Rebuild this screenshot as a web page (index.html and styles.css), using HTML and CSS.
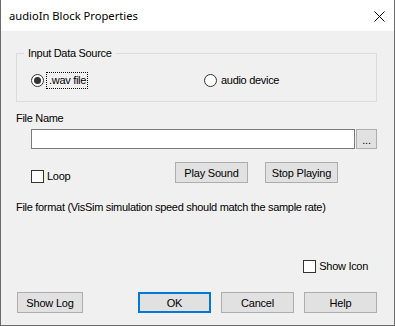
FILE: index.html
```html
<!DOCTYPE html>
<html lang="en">
<head>
  <meta charset="UTF-8">
  <title>audioIn Block Properties</title>
  <link rel="stylesheet" href="styles.css">
</head>
<body>

<div class="window">
  <div class="titlebar">
    <span class="title">audioIn Block Properties</span>
    <svg class="close" width="11" height="11" viewBox="0 0 11 11">
      <path d="M0.5 0.5 L10.5 10.5 M10.5 0.5 L0.5 10.5" stroke="#000" stroke-width="1" fill="none"/>
    </svg>
  </div>

  <div class="content">
    <fieldset class="group">
      <legend>Input Data Source</legend>
      <div class="radios">
        <label class="radio checked"><span class="circle"></span><span class="focus">.wav file</span></label>
        <label class="radio"><span class="circle"></span><span>audio device</span></label>
      </div>
    </fieldset>

    <div class="field-label">File Name</div>
    <div class="file-row">
      <div class="textbox"></div>
      <button class="btn browse">...</button>
    </div>

    <div class="play-row">
      <label class="check loop"><span class="box"></span>Loop</label>
      <button class="btn play">Play Sound</button>
      <button class="btn stop">Stop Playing</button>
    </div>

    <div class="note">File format (VisSim simulation speed should match the sample rate)</div>

    <div class="icon-row">
      <label class="check"><span class="box"></span>Show Icon</label>
    </div>

    <div class="bottom-row">
      <button class="btn showlog">Show Log</button>
      <div class="actions">
        <button class="btn default">OK</button>
        <button class="btn">Cancel</button>
        <button class="btn">Help</button>
      </div>
    </div>
  </div>
</div>

</body>
</html>
```

FILE: styles.css
```css
* {
  box-sizing: border-box;
  margin: 0;
  padding: 0;
}

body {
  background-color: #f0f0f0;
  font-family: 'Liberation Sans', Arial, sans-serif;
  font-size: 11px;
  line-height: 13px;
  letter-spacing: -0.3px;
  color: #000;
}

.window {
  width: 395px;
  height: 326px;
  border: 1px solid #6b6b6b;
  border-top: none;
  background-color: #f0f0f0;
}

.titlebar {
  height: 31px;
  background-color: #fff;
  display: flex;
  justify-content: space-between;
  align-items: center;
  padding: 0 9px 0 8px;
}

.title {
  font-family: 'Noto Sans', sans-serif;
  font-size: 11.2px;
  letter-spacing: 0;
  line-height: 16px;
}

.close {
  display: block;
  margin-top: 1px;
}

.content {
  padding: 16px 17px 0 15px;
}

.group {
  border: 1px solid #dcdcdc;
  height: 55px;
  padding: 0 7px;
}

.group legend {
  padding: 0 4px;
  line-height: 13px;
}

.radios {
  display: flex;
  align-items: center;
  height: 41px;
  padding-left: 7px;
}

.radio {
  display: flex;
  align-items: center;
  gap: 2px;
}

.radio:first-child {
  width: 173px;
}

.circle {
  width: 13px;
  height: 13px;
  border: 1px solid #333;
  border-radius: 50%;
  background-color: #fff;
  display: flex;
  align-items: center;
  justify-content: center;
}

.radio.checked .circle::after {
  content: "";
  width: 7px;
  height: 7px;
  border-radius: 50%;
  background-color: #333;
}

.radio span:last-child {
  padding: 1px 1px 1px 2px;
}

.focus {
  border: 1px dotted #000;
}

.field-label {
  margin-top: 10px;
}

.file-row {
  display: flex;
  gap: 1px;
  margin-top: 4px;
  padding-left: 15px;
}

.textbox {
  width: 324px;
  height: 20px;
  background-color: #fff;
  border: 1px solid #7a7a7a;
}

.btn {
  font-family: 'Liberation Sans', Arial, sans-serif;
  font-size: 11px;
  letter-spacing: -0.2px;
  color: #000;
  width: 73px;
  height: 21px;
  background-color: #e1e1e1;
  border: 1px solid #adadad;
}

.btn.browse {
  width: 21px;
  height: 20px;
  padding-top: 2px;
}

.btn.default {
  border: 2px solid #0078d7;
}

.play-row {
  display: flex;
  margin-top: 13px;
  padding-left: 15px;
}

.check {
  display: flex;
  align-items: center;
  gap: 3px;
}

.box {
  width: 13px;
  height: 13px;
  border: 1px solid #333;
  background-color: #fff;
}

.loop {
  align-self: flex-end;
  width: 144px;
}

.stop {
  margin-left: 17px;
}

.note {
  margin-top: 18px;
}

.icon-row {
  display: flex;
  justify-content: flex-end;
  margin-top: 46px;
  padding-right: 9px;
}

.bottom-row {
  display: flex;
  justify-content: space-between;
  margin-top: 19px;
  padding-left: 1px;
}

.btn.showlog {
  width: 66px;
}

.actions {
  display: flex;
  gap: 10px;
}
```
